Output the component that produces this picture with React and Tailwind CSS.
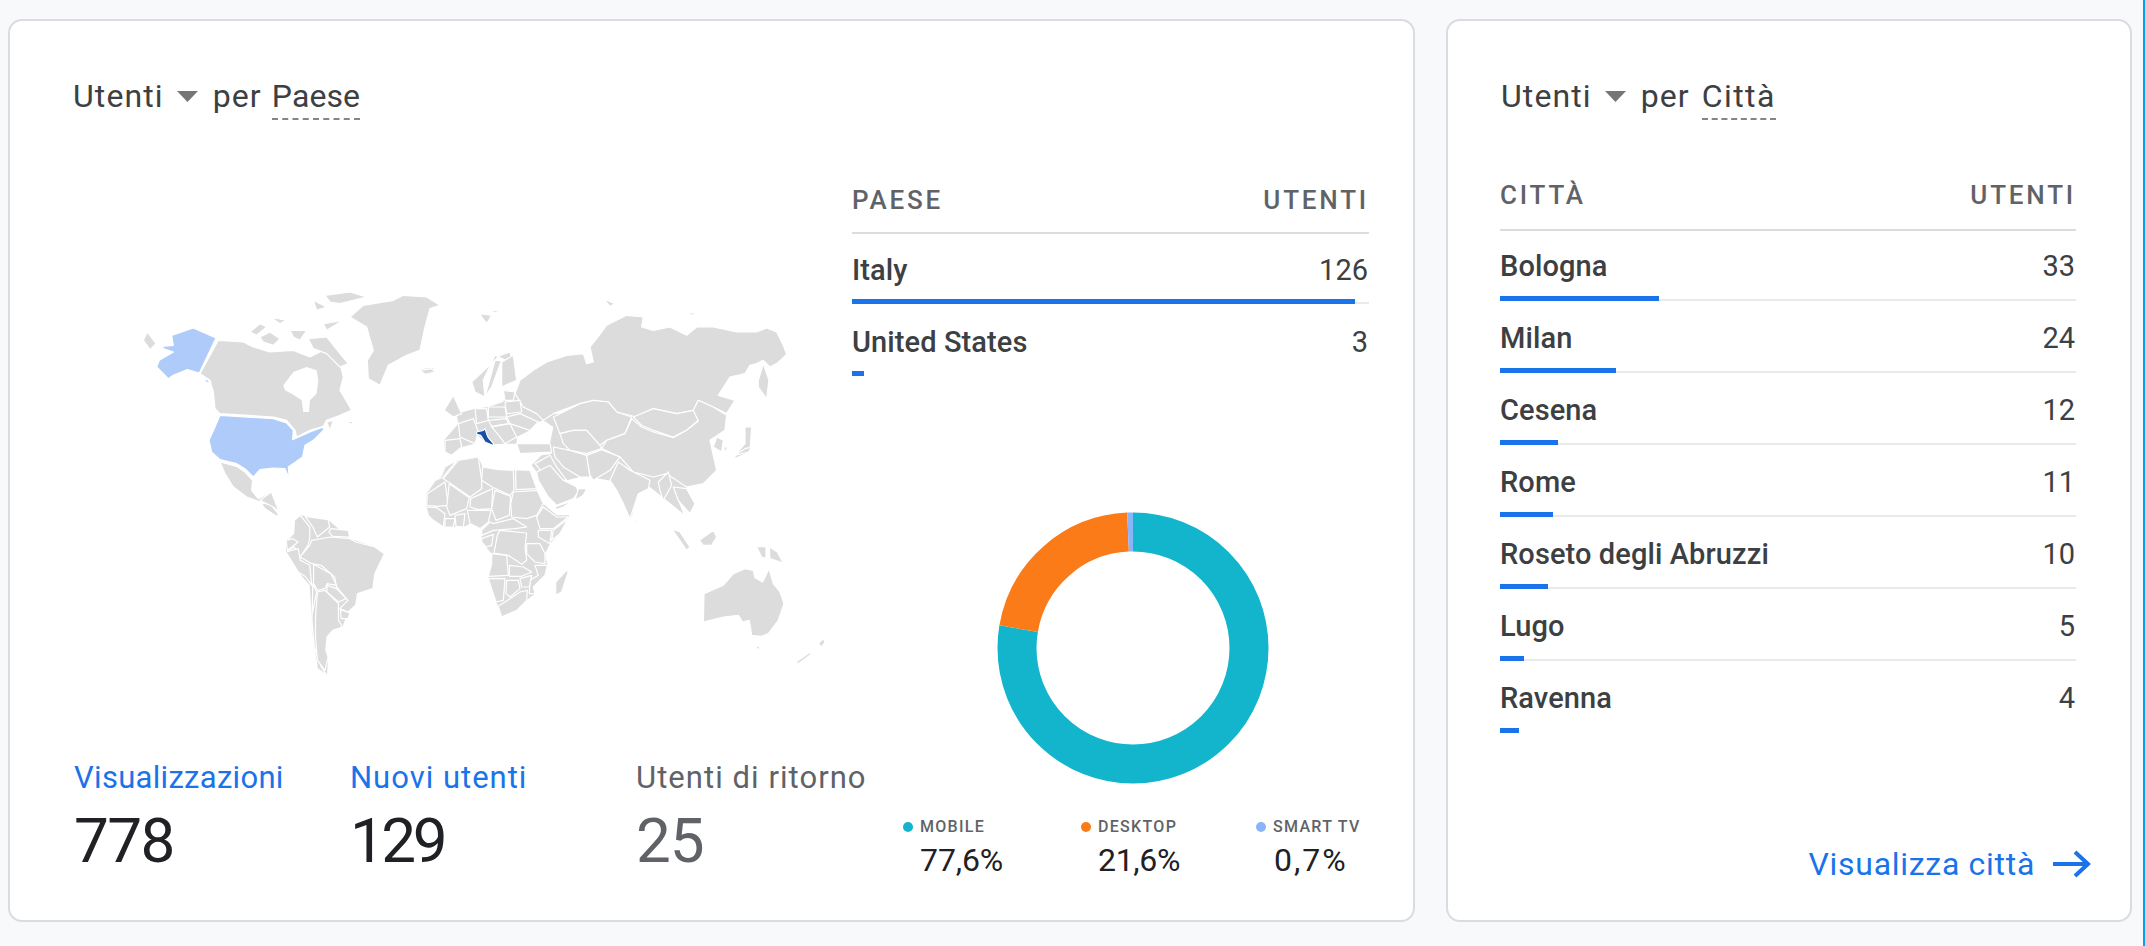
const GREY = '#dcdcdc';

const Z2 = [
  '325,220 400,225 430,240 480,255 550,250 600,270 640,250 690,290 700,330 690,370 725,430 690,445 650,460 640,478 600,490 560,510 555,490 530,460 490,450 330,440 315,425 310,375 300,340 270,320',
  '420,195 450,170 470,180 440,205','450,210 480,195 510,215 490,235 460,225','480,150 530,160 510,170','540,190 590,190 570,220 550,210',
  '595,215 650,210 690,260 715,290 690,300 650,260 610,245','640,170 700,160 650,190','645,85 720,75 770,90 690,110 660,105','610,100 650,120 620,130',
  '720,150 760,115 850,100 880,85 950,90 990,115 960,125 945,180 930,250 890,265 835,295 810,355 775,335 772,280 790,250 770,180 745,165',
  '930,305 970,300 975,315 945,325','100,220 112,195 138,230 120,248',
  '330,585 380,598 405,615 428,640 425,670 445,695 480,675 490,680 470,700 450,705 410,690 370,660 345,620',
  '450,705 485,715 510,748 495,745 465,725','650,465 670,460 660,490','710,465 730,462 725,472',
];
const Z2Blue = [
  '185,205 250,183 318,213 268,318 232,308 190,325 175,335 140,300 148,280 190,255 160,245 157,238 190,235',
  '280,335 297,340 298,348 288,345',
  '330,445 490,455 530,468 550,490 548,518 600,495 640,480 640,490 610,520 585,535 578,570 535,600 538,635 525,605 490,603 450,608 430,630 405,605 380,590 330,578 305,555 297,520 315,480',
];
const Z2Hole = '520,355 550,315 590,300 620,310 625,340 620,380 600,400 597,435 580,435 575,400 545,380 525,370';

const Z3Base = [
  '72,520 115,470 110,440 165,425 205,420 250,405 260,370 285,380 310,420 350,440 370,460 355,465 330,490 290,510 290,530 255,530 222,532 195,525 170,502 165,530 125,540 95,565 75,555',
  '370,460 400,440 920,440 915,490 870,520 890,610 850,650 800,660 800,690 770,690 790,740 740,700 690,660 650,680 635,750 610,700 590,650 565,640 510,630 480,630 440,640 395,640 400,590 390,530 400,480',
];
const Z3 = [
  '285,380 300,340 340,310 380,285 440,265 490,260 500,290 520,285 510,240 530,215 560,175 620,145 670,150 665,180 700,190 750,180 800,205 830,180 880,180 950,195 1010,195 1040,183 1070,195 1090,235 1100,262 1070,290 1050,300 1030,280 1010,290 990,295 975,320 930,330 895,385 945,400 920,440 880,420 835,400 820,430 770,440 700,425 650,450 590,435 565,405 520,400 480,410 400,440 370,460 350,440 310,420',
  '1015,340 1030,290 1047,340 1040,395 1015,360','550,95 585,110 570,118','800,135 830,140 815,145','178,140 215,145 200,170','210,130 240,132 225,138','0,310 35,305 45,315 15,322',
  '400,450 480,410 520,400 565,405 590,435 635,450 615,500 560,520 540,535 500,490 460,490 420,500',
  '640,450 700,425 770,440 820,430 835,460 800,490 760,510 700,490 665,475',
  '635,455 665,480 700,495 760,512 800,490 835,462 820,430 835,400 880,420 920,445 915,490 870,520 890,610 850,650 800,660 740,620 700,630 640,615 600,570 545,545 560,520 615,500',
  '420,500 460,490 500,490 540,535 545,545 500,560 450,550 430,530',
  '400,540 450,550 500,565 510,630 480,630 430,600 405,570',
  '500,565 545,548 600,570 570,610 520,640 510,625',
  '890,510 910,520 905,555 880,540','975,480 995,480 990,555 945,575 945,565 975,530',
  '290,530 390,530 395,555 300,560','72,430 100,385 125,440 100,450','155,345 240,265 270,255 280,290 225,265 190,340 195,390 165,375',
  '195,390 225,280 245,280 215,360','245,285 280,265 290,340 245,360',
  '115,470 160,455 175,495 165,530 120,510','75,520 120,515 125,540 95,565 75,555','165,425 200,425 205,460 170,470','205,420 255,420 260,450 205,450',
  '260,450 300,440 355,465 330,490 270,470','255,405 300,400 305,435 260,440','215,480 270,470 290,510 255,530 240,510','250,370 285,375 280,400 255,400',
  '205,460 260,455 265,470 215,478','345,590 390,565 410,600 440,640 395,640 370,620',
];
const Z3Blue = ['170,495 190,490 195,485 200,500 205,512 222,532 218,535 195,525 182,505 170,502','177,535 180,535 180,542 177,542'];

const Z10Base = [
  '95,85 105,60 140,40 205,30 218,60 265,68 310,70 360,70 380,125 400,170 440,205 480,205 450,260 420,290 405,320 412,355 405,385 370,420 375,440 350,460 320,490 275,510 265,478 258,465 235,395 245,350 245,320 228,300 215,285 215,265 240,225 210,245 180,230 160,240 130,240 100,240 70,220 48,180 50,135 75,100',
  '365,55 395,25 430,20 470,70 490,95 460,100 420,55 380,75',
];
const Z10 = [
  '95,85 105,60 140,40 100,90 75,100 55,130 50,135 75,100','100,95 145,40 205,30 215,100 215,125 180,150 115,105','218,60 265,68 310,70 312,130 300,145 250,122 215,100',
  '317,68 360,70 380,125 318,128','52,140 105,105 115,175 80,178 50,175','118,110 178,152 170,185 120,205 110,180','182,155 248,125 245,185 205,188 180,180',
  '255,130 302,148 298,205 258,220 245,185','310,135 382,130 400,170 380,205 350,215 305,210 302,170','380,210 400,180 440,210 475,210 430,245 390,245',
  '425,280 430,250 475,215 480,205 450,260','385,250 425,250 420,290 385,270','48,180 80,182 105,200 100,240 70,220 55,205','105,215 135,215 130,240 105,240',
  '172,190 243,190 235,225 210,245 180,230','135,205 165,200 160,240 138,238','250,230 310,215 350,240 315,245 250,250 215,265 215,250 240,225',
  '215,275 250,262 245,295 228,300 215,285','270,250 350,258 345,300 350,340 335,352 295,325 252,318 262,265','350,290 390,290 405,320 405,350 375,345 350,320',
  '245,320 290,325 295,385 235,388 245,350','298,355 340,360 365,375 335,388 298,388','375,355 412,355 405,385 370,420 375,440 358,440 360,400 385,385',
  '330,395 365,385 358,420 335,420','235,395 285,395 280,460 258,465','290,400 325,400 330,425 300,450 288,440','265,478 285,465 330,435 352,430 350,460 320,490 275,510',
  '470,370 475,375 455,435 437,445 437,405','380,75 420,55 460,100 500,120 505,135 490,155 440,175 415,150 385,100','435,180 490,160 460,180 440,188','505,125 530,125 520,145 495,160',
  '600,100 625,45 660,70 720,100 715,125 685,140 660,215 640,170 620,130','675,220 683,222 682,234','745,105 775,75 785,115 760,160 750,130','790,120 830,125 855,170 840,200 805,160','785,245 810,255 840,300 830,310',
];
const Z11 = [
  '40,525 42,440 100,415 130,380 165,365 190,370 195,392 218,405 237,365 250,410 270,435 282,470 265,520 235,560 215,568 185,565 178,520 158,525 145,505 100,510 60,520',
  '198,600 212,595 205,610','385,590 400,575 405,585 395,600','318,645 365,612 360,625 325,650','28,280 70,250 80,270 65,295 40,295','200,300 228,298 228,335 215,330','238,300 262,315 280,348 240,335',
  '95,150 100,152 100,165','100,0 112,0 108,18','135,25 165,5 185,0 175,15',
];
const Z4Base = ['105,115 178,128 235,185 300,210 325,230 300,290 295,335 255,350 250,385 230,405 215,450 190,460 175,480 172,520 178,540 175,595 150,575 135,470 135,420 130,325 100,285 68,225 68,190 88,170 90,130'];
const Z4 = [
  '75,185 88,170 90,130 105,115 130,150 130,185 125,205 105,240 90,210 72,222','118,118 178,128 182,150 150,180 138,150','185,155 230,160 235,180 190,178 180,165',
  '135,190 185,180 235,185 250,195 300,210 325,230 300,290 295,335 255,350 250,385 230,405 208,395 230,370 200,330 195,300 160,265 135,260 105,240 130,205',
  '68,190 85,185 100,195 72,220','68,225 100,215 105,250 130,265 135,325 120,300 100,285','140,262 185,290 200,325 175,320 170,335 150,340 140,320','175,325 200,335 225,365 205,375 175,345',
  '138,320 148,345 135,420 142,510 160,570 175,595 150,575 135,470','150,345 170,340 205,380 205,430 215,450 190,460 175,480 172,520 178,540 170,580 150,550 145,480 145,420','210,398 235,408 230,425 212,425',
  '0,70 30,45 50,105 35,90',
];

function Polys({ list, fill }) {
  return list.map((p, i) => (
    <polygon key={i} points={p} fill={fill} stroke="#ffffff" strokeWidth="1.2" strokeLinejoin="round" vectorEffect="non-scaling-stroke" />
  ));
}
function Base({ list }) {
  return list.map((p, i) => <polygon key={i} points={p} fill={GREY} />);
}

function WorldMap() {
  return (
    <svg width="700" height="410" viewBox="135 285 700 410" className="block ml-[61px]">
      <g transform="translate(110 270) scale(0.3333)">
        <Polys list={Z2} fill={GREY} />
        <polygon points={Z2Hole} fill="#ffffff" />
        <Polys list={Z2Blue} fill="#aecbfa" />
      </g>
      <g transform="translate(410 450) scale(0.3333)"><Base list={Z10Base} /></g>
      <g transform="translate(420 270) scale(0.3333)">
        <Base list={Z3Base} />
        <Polys list={Z3} fill={GREY} />
        <Polys list={Z3Blue} fill="#174ea6" />
      </g>
      <g transform="translate(410 450) scale(0.3333)"><Polys list={Z10} fill={GREY} /></g>
      <g transform="translate(690 450) scale(0.3333)"><Polys list={Z11} fill={GREY} /></g>
      <g transform="translate(260 480) scale(0.3827 0.3333)">
        <Base list={Z4Base} />
        <Polys list={Z4} fill={GREY} />
      </g>
    </svg>
  );
}

function Donut() {
  const r = 116, c = 2 * Math.PI * r;
  const segs = [
    { v: 0.776, o: 0, col: '#12b5cb' },
    { v: 0.216, o: 0.776, col: '#fa7b17' },
    { v: 0.008, o: 0.992, col: '#8ab4f8' },
  ];
  return (
    <svg width="280" height="280" viewBox="0 0 280 280" className="block ml-[141px]">
      <g transform="rotate(-90 140 140)">
        {segs.map((s) => (
          <circle key={s.col} cx="140" cy="140" r={r} fill="none" stroke={s.col} strokeWidth="39" strokeDasharray={`${s.v * c} ${c}`} strokeDashoffset={-s.o * c} />
        ))}
      </g>
    </svg>
  );
}

function Title({ dim, dimClass }) {
  return (
    <div className="flex items-baseline text-[32px] leading-[36px] tracking-[1.1px] text-[#3c4043] font-['Roboto',sans-serif]">
      <span>Utenti</span>
      <svg width="21" height="11" viewBox="0 0 21 11" className="ml-[13px] -translate-y-[5px]"><polygon points="0,0 21,0 10.5,11" fill="#757575" /></svg>
      <span className="ml-[15px]">per</span>
      <span className={`border-b-2 border-dashed border-[#80868b] pb-[4px] ${dimClass}`}>{dim}</span>
    </div>
  );
}

function TableHead({ left, pad }) {
  return (
    <div className={`flex justify-between items-center h-[66px] border-b-2 border-[#dadce0] text-[26px] font-medium tracking-[2.8px] text-[#5f6368] font-['Roboto',sans-serif] ${pad}`}>
      <span>{left}</span>
      <span>UTENTI</span>
    </div>
  );
}

function Row({ name, val, w, line, top }) {
  return (
    <div className={`h-[72px] relative flex justify-between text-[29px] leading-[36px] text-[#3c4043] font-['Roboto',sans-serif] ${top} ${line ? 'border-b-2 border-[#e8eaed]' : ''}`}>
      <span className="font-medium tracking-[0.1px]">{name}</span>
      <span className="mr-[1px]">{val}</span>
      <div className={`absolute left-0 h-[5px] bg-[#1a73e8] ${line ? 'bottom-[-2px]' : 'bottom-0'}`} style={{ width: w }} />
    </div>
  );
}

function Stat({ label, value, color, valueColor, w, track, valueTrack }) {
  return (
    <div style={{ width: w }} className="shrink-0 font-['Roboto',sans-serif]">
      <div className={`text-[31px] leading-[36px] whitespace-nowrap ${color} ${track}`}>{label}</div>
      <div className={`text-[62px] leading-[72px] mt-[9px] ${valueColor} ${valueTrack}`}>{value}</div>
    </div>
  );
}

function Legend({ dot, label, value, w, valueClass }) {
  return (
    <div style={{ width: w }} className="shrink-0 font-['Roboto',sans-serif]">
      <div className="flex items-center gap-[7px]">
        <span className={`w-[10px] h-[10px] rounded-full ${dot}`} />
        <span className="text-[16px] leading-[20px] font-medium tracking-[1.3px] text-[#5f6368]">{label}</span>
      </div>
      <div className={`mt-[5px] text-[32px] leading-[36px] text-[#202124] ${valueClass}`}>{value}</div>
    </div>
  );
}

const cities = [
  ['Bologna', 33, 159], ['Milan', 24, 116], ['Cesena', 12, 58], ['Rome', 11, 53],
  ['Roseto degli Abruzzi', 10, 48], ['Lugo', 5, 24], ['Ravenna', 4, 19],
];

export default function App() {
  return (
    <div className="h-[946px] w-[2145px] overflow-hidden bg-[#f8f9fa] flex items-start pl-[8px] pt-[19px]">
      <div className="w-[1407px] h-[903px] shrink-0 bg-white rounded-[14px] border-2 border-[#dadce0] pl-[63px] pt-[57px]">
        <Title dim="Paese" dimClass="ml-[10px] tracking-[0.1px]" />
        <div className="flex mt-[55px] pl-[1px]">
          <div className="w-[778px] shrink-0">
            <div className="mt-[107px]"><WorldMap /></div>
            <div className="flex mt-[68px]">
              <Stat label="Visualizzazioni" value="778" color="text-[#1a73e8]" valueColor="text-[#202124]" w={276} track="tracking-[0.3px]" valueTrack="tracking-[-1.6px]" />
              <Stat label="Nuovi utenti" value="129" color="text-[#1a73e8]" valueColor="text-[#202124]" w={286} track="tracking-[1px]" valueTrack="tracking-[-3.5px]" />
              <Stat label="Utenti di ritorno" value="25" color="text-[#5f6368]" valueColor="text-[#5f6368]" w={216} track="tracking-[1.05px]" valueTrack="tracking-[-1.2px]" />
            </div>
          </div>
          <div className="w-[517px] shrink-0 -mt-[7px]">
            <TableHead left="PAESE" pad="" />
            <div className="-mt-[2px]">
              <Row name="Italy" val="126" w={503} line top="pt-[20px]" />
              <Row name="United States" val="3" w={12} top="pt-[20px]" />
            </div>
            <div className="mt-[132px]"><Donut /></div>
            <div className="flex pl-[51px] mt-[29px]">
              <Legend dot="bg-[#12b5cb]" label="MOBILE" value="77,6%" w={178} valueClass="pl-[17px] tracking-[-0.1px]" />
              <Legend dot="bg-[#fa7b17]" label="DESKTOP" value="21,6%" w={175} valueClass="pl-[17px] tracking-[-0.3px]" />
              <Legend dot="bg-[#8ab4f8]" label="SMART TV" value="0,7%" w={110} valueClass="pl-[18px] tracking-[2px]" />
            </div>
          </div>
        </div>
      </div>
      <div className="ml-[31px] w-[686px] h-[903px] shrink-0 bg-white rounded-[14px] border-2 border-[#dadce0] pl-[52px] pr-[54px] pt-[57px] relative">
        <div className="ml-[1px]"><Title dim="Città" dimClass="ml-[12px] tracking-[1.4px]" /></div>
        <div className="mt-[45px]">
          <TableHead left="CITTÀ" pad="pb-[4px]" />
          <div className="-mt-[2px]">
            {cities.map(([n, v, w], i) => (
              <Row key={n} name={n} val={v} w={w} line={i < 6} top="pt-[19px]" />
            ))}
          </div>
        </div>
        <div className="absolute right-[39px] bottom-[38px] flex items-center gap-[18px] text-[#1a73e8] font-['Roboto',sans-serif] text-[32px] leading-[36px] tracking-[0.7px]">
          <span>Visualizza città</span>
          <svg width="38" height="28" viewBox="0 0 38 28" fill="none" stroke="#1a73e8" strokeWidth="4"><path d="M0 14H35M22 2L35 14L22 26" /></svg>
        </div>
      </div>
      <div className="ml-auto w-[2px] h-[946px] -mt-[19px] bg-[#00a2ed]" />
    </div>
  );
}
